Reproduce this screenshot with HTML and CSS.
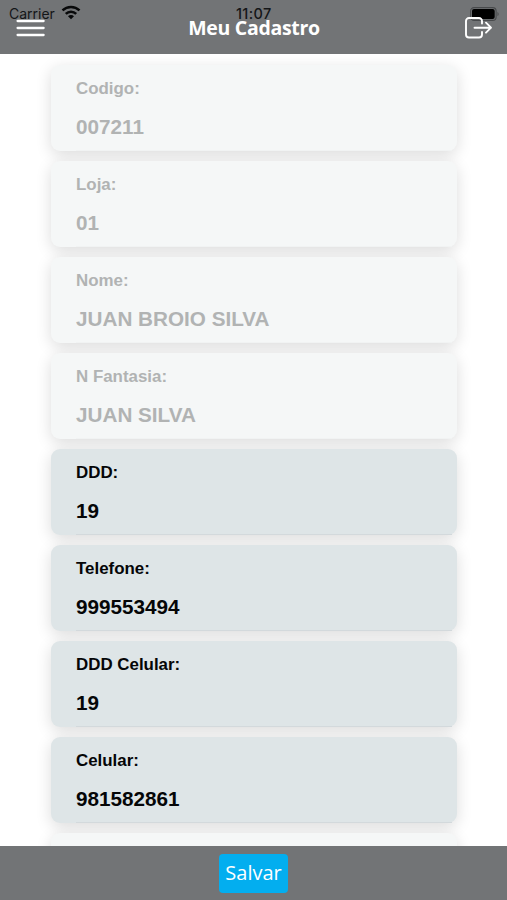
FILE: index.html
```html
<!DOCTYPE html>
<html lang="pt-BR">
<head>
  <meta charset="UTF-8" />
  <meta name="viewport" content="width=device-width, initial-scale=1.0" />
  <title>Meu Cadastro</title>
  <link rel="stylesheet" href="styles.css">
</head>
<body>

  <header class="header">
    <div class="status-bar">
      <span class="carrier">Carrier</span>
      <svg class="wifi" width="20" height="15" viewBox="0 0 20 15" fill="none" stroke="#08090a" stroke-width="2.5">
        <path d="M1.5 5.4a12.2 12.2 0 0 1 17 0M4.8 8.9a7.3 7.3 0 0 1 10.4 0" />
        <path d="M10 14.2l-3-3a4.2 4.2 0 0 1 6 0z" fill="#08090a" stroke="none" />
      </svg>
      <span class="clock">11:07</span>
      <svg class="battery" width="30" height="14" viewBox="0 0 30 14">
        <rect x="0.6" y="0.6" width="25.5" height="12.8" rx="3.5" fill="none" stroke="#484a4c" stroke-width="1.1" />
        <rect x="2" y="2" width="22.7" height="10" rx="2" fill="#000" />
        <path d="M27.5 4.7q2.3 2.3 0 4.6z" fill="#484a4c" />
      </svg>
    </div>

    <button class="icon-button" aria-label="Menu">
      <svg width="29" height="18" viewBox="0 0 29 18" fill="none" stroke="#fff" stroke-width="2.3" stroke-linecap="round">
        <path d="M1.6 2h26M1.6 9h26M1.6 16h26" />
      </svg>
    </button>
    <h1 class="title">Meu Cadastro</h1>
    <button class="icon-button" aria-label="Sair">
      <svg width="28" height="22" viewBox="0 0 28 22" fill="none" stroke="#fff" stroke-width="1.9" stroke-linecap="round" stroke-linejoin="round">
        <path d="M17 6.5V4a3 3 0 0 0-3-3H4a3 3 0 0 0-3 3v13.5a3 3 0 0 0 3 3h10a3 3 0 0 0 3-3V15" />
        <path d="M9.5 10.7H26M21 5.7l5 5-5 5" />
      </svg>
    </button>
  </header>

  <main class="form">
    <div class="card disabled">
      <label>Codigo:</label>
      <p>007211</p>
    </div>
    <div class="card disabled">
      <label>Loja:</label>
      <p>01</p>
    </div>
    <div class="card disabled">
      <label>Nome:</label>
      <p>JUAN BROIO SILVA</p>
    </div>
    <div class="card disabled">
      <label>N Fantasia:</label>
      <p>JUAN SILVA</p>
    </div>
    <div class="card">
      <label>DDD:</label>
      <p>19</p>
    </div>
    <div class="card">
      <label>Telefone:</label>
      <p>999553494</p>
    </div>
    <div class="card">
      <label>DDD Celular:</label>
      <p>19</p>
    </div>
    <div class="card">
      <label>Celular:</label>
      <p>981582861</p>
    </div>
    <div class="card disabled"></div>
  </main>

  <footer class="footer">
    <button class="save-button">Salvar</button>
  </footer>

</body>
</html>
```
FILE: styles.css
```css
* {
  box-sizing: border-box;
}

body {
  margin: 0;
  height: 100vh;
  display: flex;
  flex-direction: column;
  overflow: hidden;
  background: #fff;
  font-family: 'Liberation Sans', Arial, sans-serif;
}

button {
  border: 0;
  padding: 0;
  background: none;
}

.header {
  position: relative;
  z-index: 0;
  flex: none;
  height: 54px;
  padding: 2px 14px 0 16px;
  display: flex;
  align-items: center;
  justify-content: space-between;
  background: #727476;
}

.icon-button,
.icon-button svg {
  display: block;
}

.title {
  margin: 0;
  padding: 0 2px 1px 0;
  color: #fff;
  font-family: 'Open Sans', sans-serif;
  font-weight: 700;
  font-size: 19.5px;
  letter-spacing: -0.3px;
}

/* system bar, lies behind the header items */
.status-bar {
  position: absolute;
  z-index: -1;
  top: 0;
  left: 0;
  right: 0;
  height: 27px;
  padding: 0 7px 0 9px;
  display: grid;
  grid-template-columns: auto auto 1fr auto;
  align-items: center;
  color: #141618;
  font-family: Inter, sans-serif;
  font-size: 14px;
}

.wifi {
  margin: 0 0 2px 6px;
}

.clock {
  margin-left: 155px;
  font-weight: 500;
  font-size: 14.5px;
  letter-spacing: 0.4px;
}

.form {
  flex: 1;
  min-height: 0;
  overflow: hidden;
  padding: 11px 50.5px 0 51px;
  display: flex;
  flex-direction: column;
  gap: 10px;
}

.card {
  flex: none;
  height: 86px;
  padding: 14px 0 0 25px;
  border-radius: 9px;
  background: #dee5e7;
  box-shadow: 0 4px 16px rgba(0, 0, 0, 0.14);
  color: #050607;
  font-weight: bold;
}

.card label {
  display: block;
  font-size: 16.9px;
  line-height: 20px;
}

.card p {
  height: 52px;
  margin: 0 5px 0 0;
  padding-top: 16px;
  border-bottom: 1px solid #d3d9dc;
  font-size: 20.7px;
  line-height: 24px;
}

.card.disabled {
  background: #f5f7f7;
  color: #b1b3b3;
}

.card.disabled p {
  border-color: #f1f3f3;
}

.footer {
  flex: none;
  height: 54px;
  display: flex;
  align-items: center;
  justify-content: center;
  background: #727476;
}

.save-button {
  width: 69px;
  height: 39px;
  padding-bottom: 2px;
  border-radius: 4px;
  background: #03aeef;
  color: #fff;
  font-family: 'Open Sans', sans-serif;
  font-size: 20px;
}
```
